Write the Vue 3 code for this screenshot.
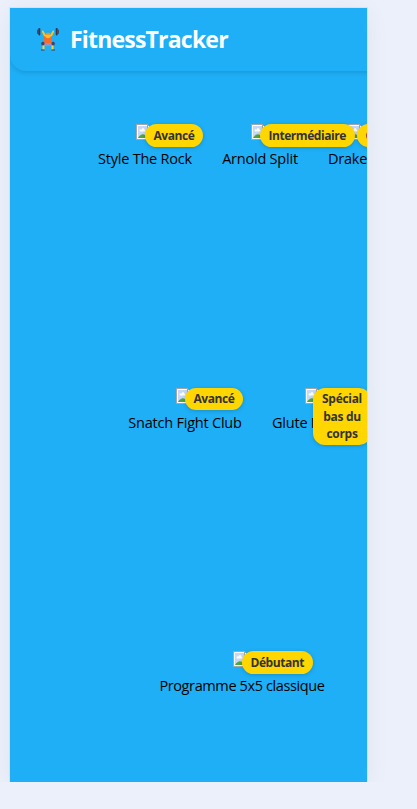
<script setup>
const rows = [
  [
    { id: 'rock', name: 'Style The Rock', level: 'Avancé' },
    { id: 'arnold', name: 'Arnold Split', level: 'Intermédiaire' },
    { id: 'drake', name: 'Drake', level: 'Célébrité' }
  ],
  [
    { id: 'snatch', name: 'Snatch Fight Club', level: 'Avancé' },
    { id: 'glute', name: 'Glute Max', level: 'Spécial bas du corps' }
  ],
  [{ id: 'five', name: 'Programme 5x5 classique', level: 'Débutant' }]
]
</script>

<template>
  <div class="app">
    <header class="header">
      <svg class="logo" viewBox="0 0 22 24" aria-hidden="true">
        <path d="M2 4.500h18" stroke="#8c8298" stroke-width="1" />
        <rect x="0" y="2.500" width="1.500" height="4.500" rx=".7" fill="#4b4d68" />
        <rect x="1.300" y="1" width="2" height="7.400" rx=".8" fill="#35354d" />
        <rect x="18.700" y="1" width="2" height="7.400" rx=".8" fill="#35354d" />
        <rect x="20.500" y="2.500" width="1.500" height="4.500" rx=".7" fill="#4b4d68" />
        <path d="M5.800 4.500 8.300 9.500M16.200 4.500 13.700 9.500" stroke="#fdc61c" stroke-width="1.800" stroke-linecap="round" />
        <path d="M7 9.200h8l-.3 8H7.300z" fill="#f56b2c" />
        <circle cx="11" cy="8.600" r="2.700" fill="#fbbf24" />
        <path d="M8.300 7.800c.5-2.600 4.900-2.600 5.400 0z" fill="#e5942b" />
        <path d="M6 16h10l1 3H5z" fill="#9c8ec2" />
        <rect x="4.200" y="14.800" width="3.300" height="3.800" rx="1.500" fill="#44435f" />
        <rect x="14.500" y="14.800" width="3.300" height="3.800" rx="1.500" fill="#44435f" />
        <path d="M6.500 18.500v4M15.500 18.500v4" stroke="#ffd13b" stroke-width="2" />
        <path d="M4 23h3.500M14.500 23h3.500" stroke="#443c57" stroke-width="1.200" />
      </svg>
      <span class="brand">FitnessTracker</span>
    </header>
    <main class="programs">
      <section v-for="(row, i) in rows" :key="i" class="row">
        <article v-for="item in row" :key="item.id" class="card" :class="item.id">
          <div class="media">
            <svg class="broken" viewBox="0 0 16 16" aria-hidden="true">
              <path d="M.5.500h11l4 4v11H.500z" fill="#c5d9f7" stroke="#a6a6a6" />
              <path d="M1.500 1.500h9.700l3.300 3.300v9.700h-13z" fill="none" stroke="#fff" />
              <path d="M4 7.500c-1.500-2 1-3 1.500-1.700C6 3.500 9 4.200 8.500 6c1.500 0 1.300 1.500.5 1.500z" fill="#fff" />
              <path d="M2 14c2-3.500 5-4.500 7-3l5 3z" fill="#4fa83d" />
              <path d="M11.500.500v4h4z" fill="#fff" stroke="#a6a6a6" />
            </svg>
            <span class="badge">{{ item.level }}</span>
          </div>
          <div class="name">{{ item.name }}</div>
        </article>
      </section>
    </main>
  </div>
</template>

<style>
body {
  background: #ecf0fa;
}
</style>

<style scoped>
.app {
  box-sizing: border-box;
  width: 357px;
  height: 774px;
  margin: 8px 0 0 10px;
  overflow: hidden;
  background: #1eaff7;
  box-shadow: 0 0 0 1px rgba(0, 0, 0, 0.05), 0 4px 24px rgba(0, 0, 0, 0.06);
  font-family: "Open Sans", "Noto Sans", sans-serif;
}
.header {
  display: flex;
  align-items: center;
  box-sizing: border-box;
  width: 500px;
  height: 63px;
  padding: 0 0 2px 27px;
  border-radius: 0 0 16px 16px;
  box-shadow: 0 2px 4px rgba(0, 0, 0, 0.12);
}
.logo {
  width: 22px;
  height: 24px;
  margin-right: 11px;
  fill: none;
}
.brand {
  color: #fff;
  font-size: 23px;
  font-weight: 700;
  letter-spacing: -0.800px;
  line-height: 32px;
  white-space: nowrap;
}
.programs {
  padding-top: 53px;
}
.row {
  display: flex;
  gap: 30px;
  height: 263.500px;
  padding-left: 88px;
}
.row:nth-child(2) {
  padding-left: 118px;
}
.row:nth-child(3) {
  padding-left: 149px;
}
.card {
  flex: none;
  display: flex;
  flex-direction: column;
  align-items: center;
}
.rock { width: 94px; }
.arnold { width: 76px; }
.drake { width: 58px; }
.snatch { width: 114px; }
.glute { width: 83px; }
.five { width: 166px; }
.media {
  position: relative;
  width: 17px;
  height: 24px;
  margin-right: 1px;
}
.broken {
  display: block;
  width: 16px;
  height: 16px;
}
.badge {
  position: absolute;
  z-index: 1;
  top: 0;
  left: 8.500px;
  box-sizing: border-box;
  padding: 2.500px 9px;
  border-radius: 12px;
  background: #ffd600;
  box-shadow: 0 1px 4px rgba(0, 0, 0, 0.18);
  color: #333;
  font-size: 12px;
  font-weight: 700;
  letter-spacing: -0.450px;
  line-height: 17.500px;
  text-align: center;
  white-space: nowrap;
}
.glute .badge {
  width: 58px;
  padding: 2.500px 6px;
  letter-spacing: -0.300px;
  white-space: normal;
}
.name {
  color: #000;
  font-size: 14.500px;
  letter-spacing: -0.220px;
  line-height: 22px;
  white-space: nowrap;
}
.five .name {
  letter-spacing: -0.380px;
}
.drake .name,
.glute .name {
  align-self: flex-start;
}
</style>
